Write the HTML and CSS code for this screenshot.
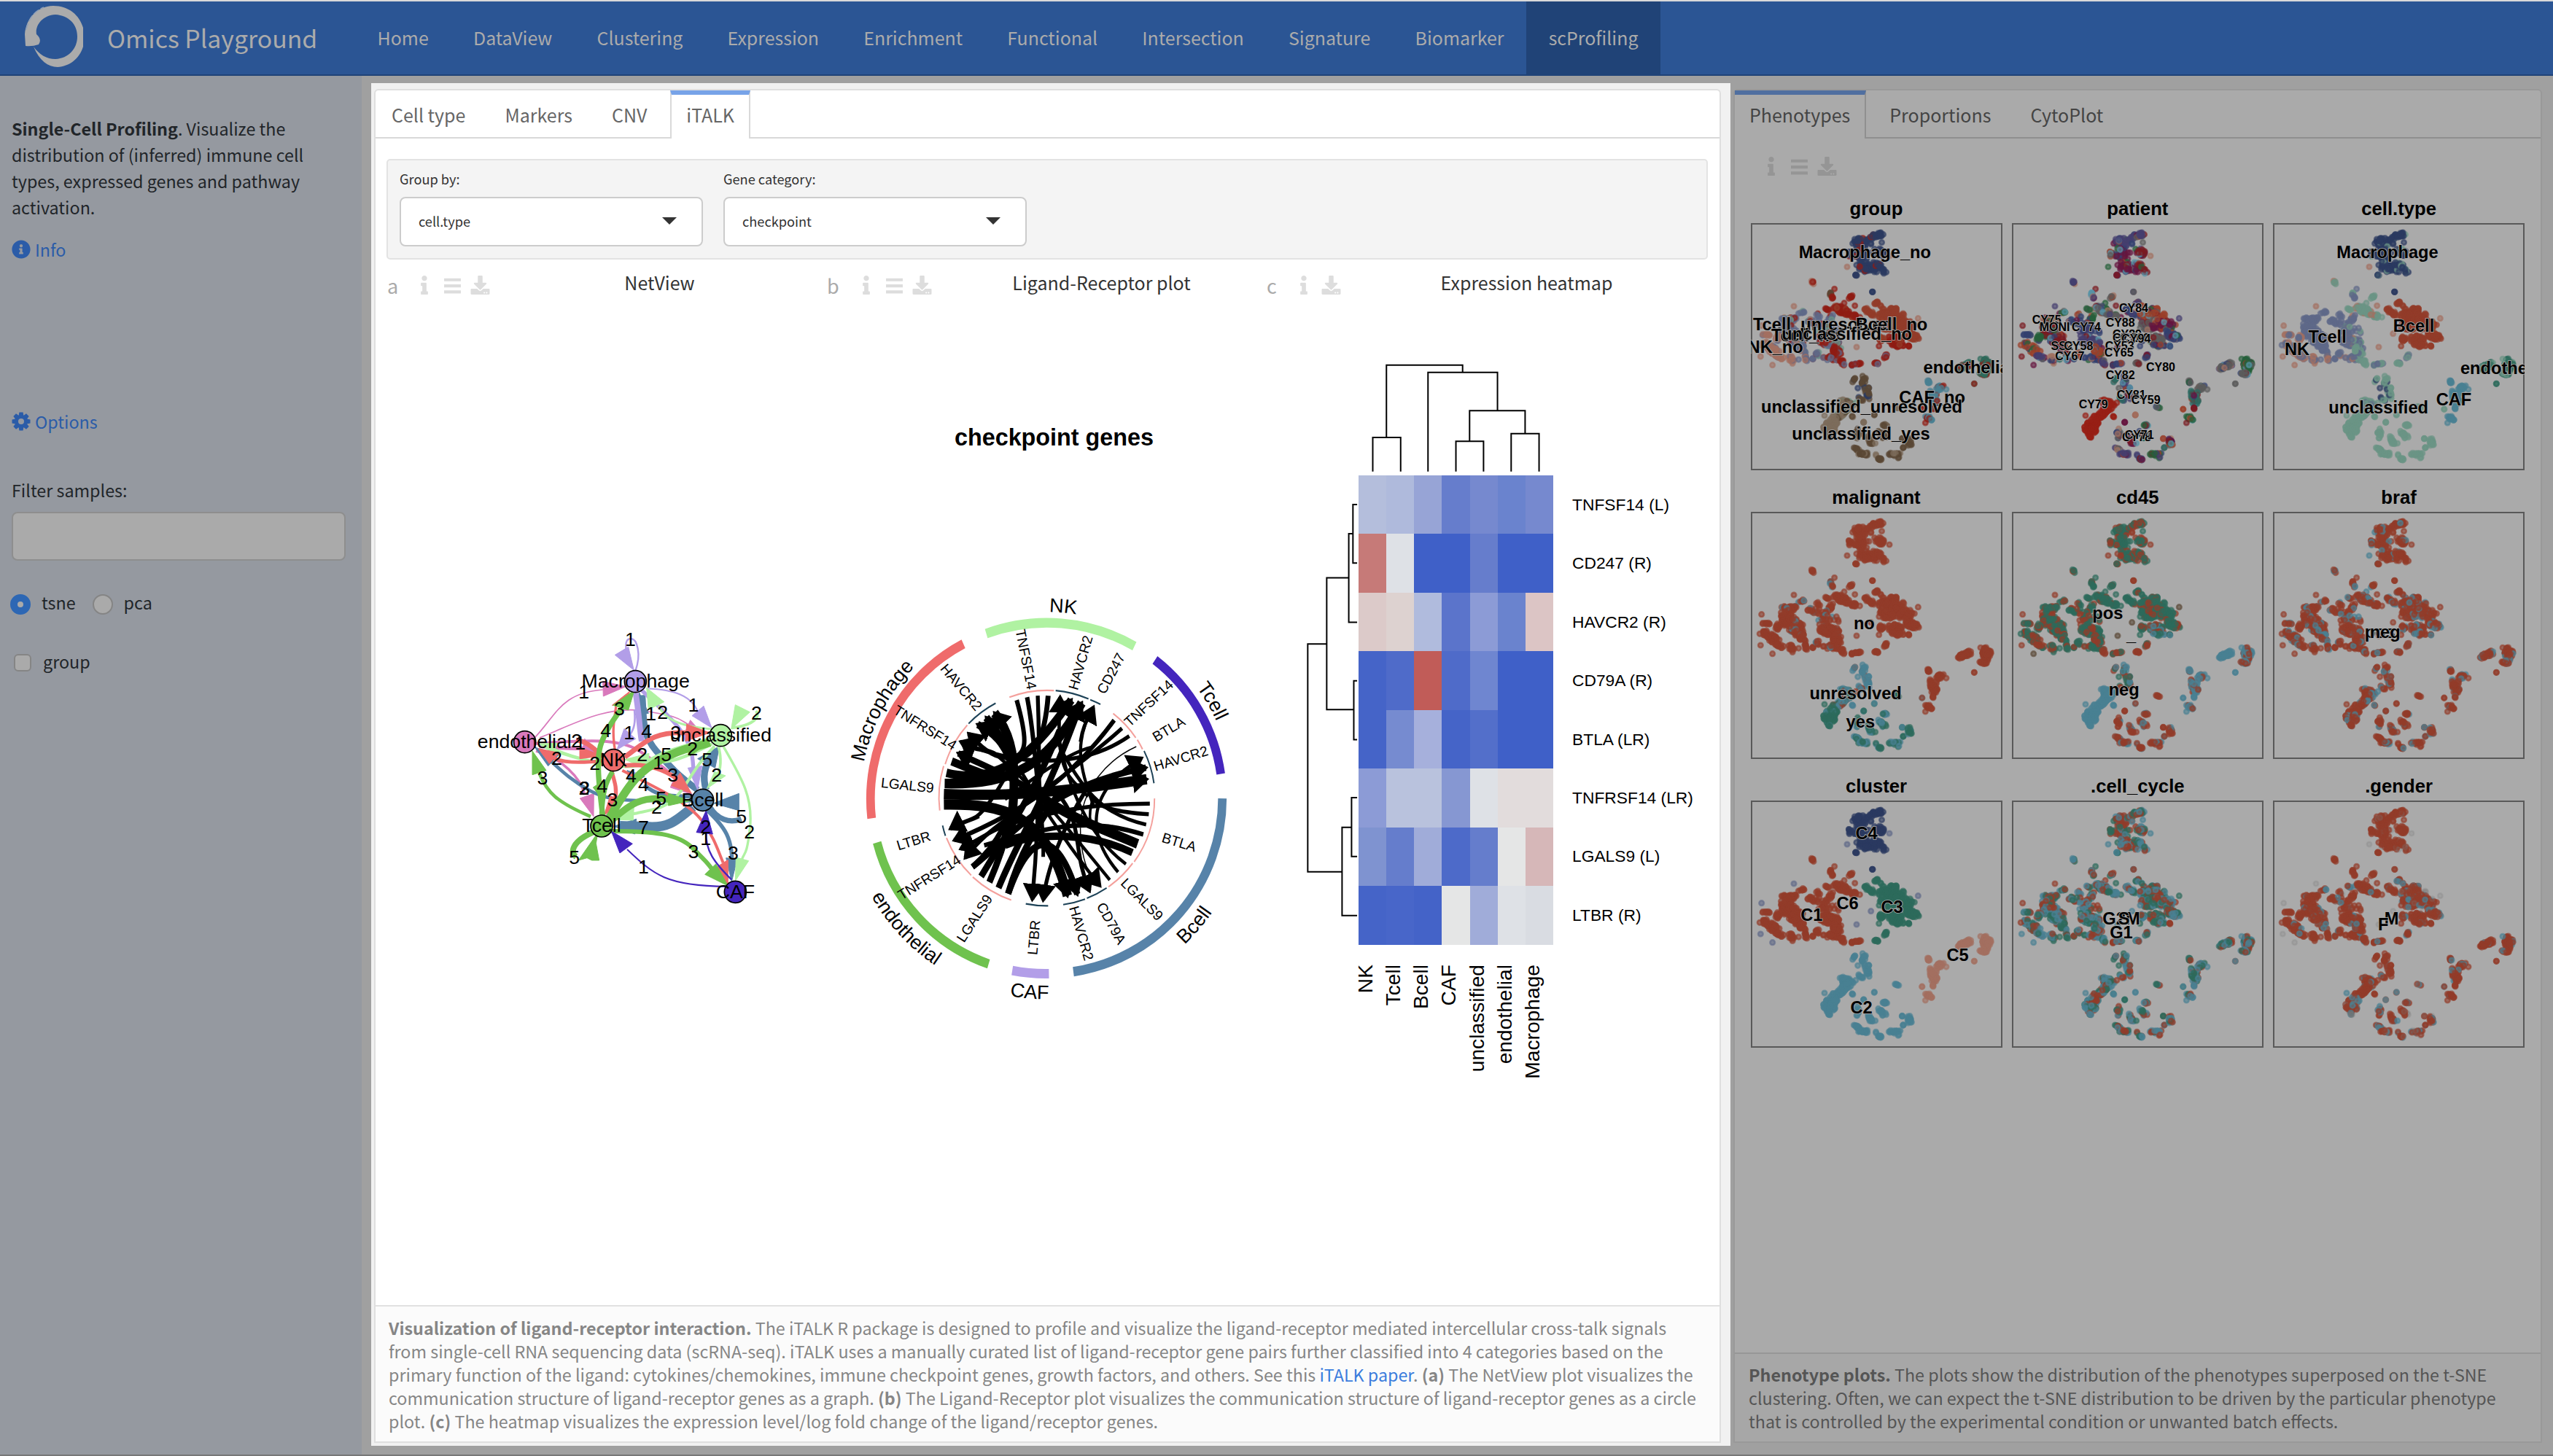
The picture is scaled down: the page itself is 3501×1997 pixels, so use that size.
FILE: index.html
```html
<!DOCTYPE html>
<html lang="en">
<head>
<meta charset="utf-8">
<title>Omics Playground</title>
<link rel="stylesheet" href="styles.css">
</head>
<body>
<svg class="defs" width="0" height="0">
  <symbol id="i-info" viewBox="0 0 192 512"><path d="M20 424.229h20V279.771H20c-11.046 0-20-8.954-20-20V212c0-11.046 8.954-20 20-20h112c11.046 0 20 8.954 20 20v212.229h20c11.046 0 20 8.954 20 20V492c0 11.046-8.954 20-20 20H20c-11.046 0-20-8.954-20-20v-47.771c0-11.046 8.954-20 20-20zM96 0C56.235 0 24 32.235 24 72s32.235 72 72 72 72-32.235 72-72S135.764 0 96 0z"/></symbol>
  <symbol id="i-bars" viewBox="0 0 24 24"><path d="M1 3h22v4H1zM1 11h22v4H1zM1 19h22v4H1z"/></symbol>
  <symbol id="i-down" viewBox="0 0 512 512"><path d="M216 0h80c13.3 0 24 10.7 24 24v168h87.7c17.8 0 26.7 21.5 14.1 34.1L269.7 378.3c-7.5 7.5-19.8 7.5-27.3 0L90.1 226.1c-12.6-12.6-3.7-34.1 14.1-34.1H192V24c0-13.3 10.7-24 24-24zm296 376v112c0 13.3-10.7 24-24 24H24c-13.3 0-24-10.7-24-24V376c0-13.3 10.7-24 24-24h146.7l49 49c20.1 20.1 52.5 20.1 72.6 0l49-49H488c13.3 0 24 10.7 24 24zm-124 88c0-11-9-20-20-20s-20 9-20 20 9 20 20 20 20-9 20-20zm64 0c0-11-9-20-20-20s-20 9-20 20 9 20 20 20 20-9 20-20z"/></symbol>
</svg>
<nav class="navbar">
  <svg class="logo" viewBox="0 0 100 110"><path d="M35 66L34 50C36 28 50 12 73 11C99 11 115 30 116 53C116 78 99 94 79 95C66 95 54 86 46 67C54 78 64 84 76 84C94 83 106 70 106 53C106 36 94 24 76 23C58 24 48 38 50 50Q58 57 53 64Q44 67 35 66Z" transform="translate(-14 0)"/><path class="bristle" d="M22 44C25 28 34 18 46 13"/></svg>
  <span class="brand">Omics Playground</span>
  <ul class="menu"><li>Home</li><li>DataView</li><li>Clustering</li><li>Expression</li><li>Enrichment</li><li>Functional</li><li>Intersection</li><li>Signature</li><li>Biomarker</li><li class="on">scProfiling</li></ul>
</nav>
<div class="page">
  <aside class="sidebar">
    <p class="intro"><b>Single-Cell Profiling</b>. Visualize the distribution of (inferred) immune cell types, expressed genes and pathway activation.</p>
    <a class="side-link info"><svg viewBox="0 0 512 512"><path d="M256 8C119.043 8 8 119.083 8 256c0 136.997 111.043 248 248 248s248-111.003 248-248C504 119.083 392.957 8 256 8zm0 110c23.196 0 42 18.804 42 42s-18.804 42-42 42-42-18.804-42-42 18.804-42 42-42zm56 254c0 6.627-5.373 12-12 12h-88c-6.627 0-12-5.373-12-12v-24c0-6.627 5.373-12 12-12h12v-64h-12c-6.627 0-12-5.373-12-12v-24c0-6.627 5.373-12 12-12h64c6.627 0 12 5.373 12 12v100h12c6.627 0 12 5.373 12 12v24z"/></svg>Info</a>
    <a class="side-link options"><svg viewBox="-13 -13 26 26"><circle r="6.5" fill="none" stroke="#2b5ca8" stroke-width="5"/><g id="teeth"><path d="M-2.6-12.5h5.2l.8 5h-6.8zM-2.6 12.5h5.2l.8-5h-6.8zM-12.5-2.6v5.2l5 .8v-6.8zM12.5-2.6v5.2l-5 .8v-6.8z"/></g><use href="#teeth" transform="rotate(45)"/></svg>Options</a>
    <label class="filter-label">Filter samples:</label>
    <div class="text-input"></div>
    <div class="radios"><i class="radio on"></i><span>tsne</span><i class="radio"></i><span>pca</span></div>
    <div class="checks"><i class="check"></i><span>group</span></div>
  </aside>
  <section class="spotlight">
    <div class="panel main">
      <div class="tabs"><span>Cell type</span><span>Markers</span><span>CNV</span><span class="on">iTALK</span></div>
      <div class="filters">
        <div class="field"><label>Group by:</label><div class="select">cell.type<i></i></div></div>
        <div class="field"><label>Gene category:</label><div class="select">checkpoint<i></i></div></div>
      </div>
      <div class="plots">
        <div class="plot a">
          <header><em>a</em><svg class="ic-i"><use href="#i-info"/></svg><svg class="ic-b"><use href="#i-bars"/></svg><svg class="ic-d"><use href="#i-down"/></svg><h3>NetView</h3></header>
          <svg class="canvas" viewBox="531 412 603 1378"><g id="net" transform="translate(630 840) scale(.33333)"></g></svg>
        </div>
        <div class="plot b">
          <header><em>b</em><svg class="ic-i"><use href="#i-info"/></svg><svg class="ic-b"><use href="#i-bars"/></svg><svg class="ic-d"><use href="#i-down"/></svg><h3>Ligand-Receptor plot</h3></header>
          <svg class="canvas" viewBox="1134 412 604 1378">
            <defs>
              <marker id="head" viewBox="0 0 64 84" refX="54" refY="42" markerWidth="64" markerHeight="84" markerUnits="userSpaceOnUse" orient="auto"><path d="M0 0L64 42L0 84Z"/></marker>
              <path id="cw" d="M1180 1095A256 256 0 0 1 1692 1095A256 256 0 0 1 1180 1095"/>
              <path id="ccw" d="M1160 1095A276 276 0 0 0 1712 1095A276 276 0 0 0 1160 1095"/>
            </defs>
            <text class="plot-title" x="1446" y="610">checkpoint genes</text>
            <g id="chord" transform="translate(1150 780) scale(.357143 .395385)" fill="none"></g>
            <g id="genes" class="genes"></g>
            <g class="sectors">
              <text><textPath href="#cw" startOffset="125">Macrophage</textPath></text>
              <text><textPath href="#cw" startOffset="424">NK</textPath></text>
              <text><textPath href="#cw" startOffset="668">Tcell</textPath></text>
              <text><textPath href="#ccw" startOffset="206">endothelial</textPath></text>
              <text><textPath href="#ccw" startOffset="409">CAF</textPath></text>
              <text><textPath href="#ccw" startOffset="671">Bcell</textPath></text>
            </g>
          </svg>
        </div>
        <div class="plot c">
          <header><em>c</em><svg class="ic-i"><use href="#i-info"/></svg><svg class="ic-d"><use href="#i-down"/></svg><h3>Expression heatmap</h3></header>
          <svg class="canvas" viewBox="1737 412 603 1378">
            <g transform="translate(1770 470) scale(.38265 .65689)"><g id="cells" shape-rendering="crispEdges"></g>
              <path class="tree" d="M294 269V198H394V269M343 198V47H616V62M492 269V62H741V142M641 206V142H840V190M592 269V206H691V269M790 269V190H890V269M238 338H223V460H238M223 399H208V584H238M208 491H129V766H226M238 706H226V829H238M129 629H61V1105H184M238 950H218V1073H238M218 1012H184V1196H238"/></g>
            <g id="hm-labels" class="hm"></g>
          </svg>
        </div>
      </div>
      <footer><b>Visualization of ligand-receptor interaction.</b> The iTALK R package is designed to profile and visualize the ligand-receptor mediated intercellular cross-talk signals<br>from single-cell RNA sequencing data (scRNA-seq). iTALK uses a manually curated list of ligand-receptor gene pairs further classified into 4 categories based on the<br>primary function of the ligand: cytokines/chemokines, immune checkpoint genes, growth factors, and others. See this <a>iTALK paper</a>. <b>(a)</b> The NetView plot visualizes the<br>communication structure of ligand-receptor genes as a graph. <b>(b)</b> The Ligand-Receptor plot visualizes the communication structure of ligand-receptor genes as a circle<br>plot. <b>(c)</b> The heatmap visualizes the expression level/log fold change of the ligand/receptor genes.</footer>
    </div>
  </section>
  <section class="panel dim">
    <div class="tabs"><span class="on">Phenotypes</span><span>Proportions</span><span>CytoPlot</span></div>
    <div class="tools"><svg class="ic-i"><use href="#i-info"/></svg><svg class="ic-b"><use href="#i-bars"/></svg><svg class="ic-d"><use href="#i-down"/></svg></div>
    <div class="grid" id="grid"></div>
    <footer><b>Phenotype plots.</b> The plots show the distribution of the phenotypes superposed on the t-SNE<br>clustering. Often, we can expect the t-SNE distribution to be driven by the particular phenotype<br>that is controlled by the experimental condition or unwanted batch effects.</footer>
  </section>
</div>
<script src="plots.js"></script>
</body>
</html>
```
FILE: styles.css
```css
*{box-sizing:border-box}
html,body{margin:0;height:100%}
body{width:3501px;height:1997px;background:#a0a0a0;font-family:"Noto Sans CJK SC","Source Sans Pro",sans-serif;font-size:23.3px;line-height:36px;color:#212529;overflow:hidden;border-top:2px solid #d9d9d9;border-bottom:2px solid #777}
.defs{position:absolute}
.navbar{height:102px;background:#2b5594;border-bottom:2px solid #204377;display:flex;align-items:center;color:#ababab;white-space:nowrap}
.logo{width:100px;height:110px;margin-left:14px;fill:#ababab;flex:none}
.bristle{fill:none;stroke:#8fa0b8;stroke-width:1.5;stroke-dasharray:9 3}
.brand{width:340px;margin-left:33px;font-size:33.8px}
.menu{display:flex;list-style:none;margin:0;padding:0;height:100%;font-size:24.95px}
.menu li{padding:0 30.6px;height:100%;line-height:98px}
.menu .on{background:#204377}
.page{display:flex;height:1891px}
.sidebar{width:496px;background:#9599a0;padding:54px 20px 0 16px;flex:none}
.intro{margin:0 0 22px;width:440px}
.side-link{display:flex;align-items:center;gap:6px;color:#2b5ca8}
.side-link svg{width:26px;height:26px;fill:#2b5ca8}
.options{margin-top:200px}
.filter-label{display:block;margin-top:58px}
.text-input{width:458px;height:67px;margin-top:12px;background:#aaa;border:2px solid #8e8e8e;border-radius:8px}
.radios,.checks{display:flex;align-items:center}
.radios{margin-top:39px;margin-left:-2px}
.radio{width:28px;height:28px;border-radius:50%;background:#aaa;border:2px solid #858585;margin-top:6px}
.radio.on{border:10px solid #2d67b4}
.radios span{margin:0 23px 0 15px}
.checks{margin:45px 0 0 3px;gap:16px}
.check{width:24px;height:24px;border:2px solid #858585;border-radius:6px;background:#aaa;margin-top:4px}
.spotlight{width:1864px;margin:10px 0 0 13px;padding:8px 13px 4px 4px;background:#f1f1f1;height:1869px;flex:none}
.panel{border:2px solid #dfdfdf;border-radius:6px 6px 0 0;background:#fff;display:flex;flex-direction:column}
.main{height:1857px}
.tabs{height:66px;flex:none;display:flex;border-bottom:2px solid #d9d9d9;gap:10px;font-size:25px;color:#666;white-space:nowrap}
.tabs span{padding:5px 22px 0;height:66px;line-height:56px}
.tabs .on{background:#fff;border:2px solid #d9d9d9;border-top:6px solid #77a3e8;border-bottom:0;padding:0 20px;line-height:54px}
.filters{margin:28px 16px 0 15px;height:138px;flex:none;background:#f4f4f4;border:2px solid #e3e3e3;border-radius:5px;padding:8px 16px;display:flex;gap:28px;font-size:18.2px}
.field{width:416px}
.field label{display:block;line-height:34px;color:#333}
.select{margin-top:8px;height:68px;border:2px solid #ccc;border-radius:8px;background:#fff;padding:0 34px 2px 24px;display:flex;align-items:center;justify-content:space-between;color:#333}
.select i{border:10px solid transparent;border-top-color:#333;border-bottom:0}
.plots{display:flex;flex:1;padding-left:16px;min-height:0}
.plot{width:603px;display:flex;flex-direction:column}
.plot header{height:56px;display:flex;flex:none;align-items:flex-start;padding-top:22px;fill:#ddd}
.plot em{font-style:normal;color:#aaa;font-size:27px;width:45px;line-height:28px}
.b em{width:48px}
.ic-i{width:12px;height:26px}.ic-b{width:25px;height:26px;margin-left:20px}.ic-d{width:27px;height:26px;margin-left:12px}
.c .ic-d{margin-left:18px}
.plot h3{flex:1;margin:-9px 0 0 3px;text-align:center;font-weight:400;font-size:25px;color:#333}
.b h3{margin-left:6px}.c h3{margin-left:8px}
.canvas{display:block;width:603px;height:1378px}
.panel footer{margin-top:auto;flex:none;border-top:2px solid #e1e1e1;background:#fbfbfb;height:187px;padding:13px 0 0 18px;color:#868686;line-height:32px;white-space:nowrap}
.panel footer a{color:#3b7ddd}
.dim{width:1109px;height:1857px;margin:18px 0 0 4px;background:#aaa;border-color:#999}
.dim .tabs{border-color:#8f8f8f;color:#444}
.dim .tabs .on{background:#aaa;border-color:#506fa0 #8f8f8f;border-left:0}
.tools{height:59px;flex:none;padding:25px 0 0 44px;fill:#959595;display:flex}
.grid{display:grid;grid-template-columns:repeat(3,345px);column-gap:13.3px;margin-left:21.5px}
figure{margin:0}
figcaption{height:57px;padding-top:19px;text-align:center;font:bold 25.7px/36px "Liberation Sans",sans-serif;color:#000}
figure svg{display:block;width:345px;height:339px}
.frame{fill:none;stroke:#595959;stroke-width:6}
figure text{font:bold 71px "Liberation Sans",sans-serif;text-anchor:middle;stroke:#aaa;stroke-width:5px;paint-order:stroke}
.small text{font-size:48px}
.panel.dim footer{height:122px;background:#a7a7a7;border-color:#979797;color:#555;padding:12px 0 0 19px}
text{font-family:"Liberation Sans",sans-serif;fill:#000}
.nodes text{font-size:80px;text-anchor:middle}
.plot-title{font-weight:bold;font-size:32.4px;text-anchor:middle}
.genes text{font-size:19.3px;text-anchor:middle}
.sectors text{font-size:27px;text-anchor:middle}
.hm text{font-size:22.8px}
.hm .col{font-size:28.2px;text-anchor:end}
.tree{fill:none;stroke:#000;stroke-width:2;vector-effect:non-scaling-stroke}
```
FILE: plots.js
```js
const byId = id => document.getElementById(id);

/* ---------- NetView graph ---------- */
const C = {pu:'#b29ee8', pi:'#d979bc', gr:'#6fc24e', lg:'#b0f2a2', re:'#ef6b6b', bl:'#5783a9', id:'#4425bd'};
const edges = [
  ['pi', 5, 'M310 515C400 420 420 330 590 318', '590,283 685,305 592,345'],
  ['pi', 5, 'M330 515C450 470 600 380 760 405S900 440 950 465', '950,443 1000,500 925,500'],
  ['pi', 12, 'M310 540C480 530 650 510 740 570S850 640 900 700', '880,690 960,750 868,720'],
  ['pi', 11, 'M315 570C420 600 500 680 515 750', '496,765 553,745 552,840'],
  ['pi', 16, 'M330 550C420 560 470 560 520 560', '515,520 580,580 500,600'],
  ['bl', 14, 'M960 775C760 770 640 790 540 735S400 630 330 570', '310,555 410,585 365,632'],
  ['bl', 27, 'M980 730C900 670 870 640 810 570S760 450 752 340', '740,330 725,422 778,415'],
  ['bl', 16, 'M960 760C850 750 820 760 760 710', '690,650 762,675 700,712'],
  ['bl', 40, 'M960 800C880 870 850 885 780 882S700 880 660 878', '635,880 728,850 722,912'],
  ['bl', 28, 'M1015 730C1000 680 1005 640 1040 580', '1070,550 1052,640 980,602'],
  ['bl', 16, 'M1015 810C1090 880 1130 930 1120 1060', '1120,1108 1097,1010 1143,1015'],
  ['bl', 22, 'M1030 800C1060 850 1110 870 1160 850', '1045,785 1150,745 1150,815'],
  ['pu', 7, 'M724 240C750 170 730 110 707 108S680 130 690 180', '640,175 695,142 718,238'],
  ['pu', 6, 'M770 313C880 318 960 340 985 420', '957,425 1005,385 1038,475'],
  ['pu', 16, 'M750 320C840 410 950 490 960 610S965 640 965 650', '940,640 998,632 980,730'],
  ['pu', 24, 'M724 325C740 420 740 470 750 530', ''],
  ['pu', 8, 'M720 400C725 450 720 480 700 505', '678,478 725,520 648,565'],
  ['pu', 18, 'M730 660C680 760 640 800 600 850', ''],
  ['lg', 9, 'M1040 480C930 470 850 450 820 385', '770,310 842,368 778,400'],
  ['lg', 12, 'M1120 475C1210 465 1240 430 1220 405', '1118,480 1135,380 1195,410'],
  ['lg', 14, 'M1040 540C960 580 860 640 740 605', '680,605 780,580 775,645'],
  ['lg', 14, 'M1030 520C850 570 830 580 760 620S460 600 380 560', '325,540 402,538 385,580'],
  ['lg', 12, 'M1050 550C960 640 940 710 890 760S800 810 710 830', '635,852 718,800 715,855'],
  ['lg', 11, 'M1065 550C1080 600 1075 650 1060 670', '1095,672 1050,655 1018,725'],
  ['lg', 10, 'M1085 550C1160 680 1210 760 1195 890S1170 980 1160 1025', '1190,1022 1138,1008 1135,1105'],
  ['re', 10, 'M640 565C625 480 640 430 645 380', '628,382 700,325 690,380'],
  ['re', 20, 'M680 595C760 540 790 490 930 495', '935,460 1030,495 930,530'],
  ['re', 14, 'M590 610C500 620 430 620 390 600', '325,560 410,578 370,622'],
  ['re', 18, 'M680 630C760 620 830 640 890 680', '908,660 955,745 872,712'],
  ['re', 20, 'M480 525C530 530 560 570 590 590', '495,555 590,590 495,602'],
  ['re', 16, 'M625 650C640 700 650 730 640 770', '620,755 675,775 595,835'],
  ['re', 12, 'M670 650C850 740 950 790 1000 860S1060 970 1085 1030', '1055,1050 1105,1018 1105,1125'],
  ['gr', 22, 'M590 840C580 750 560 620 580 550S650 420 700 350', '720,320 695,402 632,382'],
  ['gr', 20, 'M585 830C590 740 600 700 630 655', '550,720 595,690 580,760'],
  ['gr', 34, 'M615 850C700 700 740 650 840 600S960 560 1030 535', '940,570 1040,525 950,590'],
  ['gr', 28, 'M610 870C700 790 750 750 870 770', '860,745 950,775 860,795'],
  ['gr', 14, 'M540 840C400 780 360 740 330 665', '300,570 357,650 300,668'],
  ['gr', 18, 'M620 900C800 900 900 910 960 970S1020 1030 1050 1070', '1055,1035 1105,1125 1010,1078'],
  ['gr', 24, 'M560 900C460 940 455 990 480 1005', '570,905 562,950 575,1020 545,1020 525,1010 490,1020'],
  ['id', 6, 'M1100 1128C850 1125 800 1080 690 975', '625,900 712,952 660,990'],
  ['id', 7, 'M1120 1100C1050 1030 1010 980 1015 900', '1015,815 1042,912 975,905']
];
const nodes = [['endothelial',269,533,'pi',268],['Macrophage',724,284,'pu',725],['unclassified',1075,506,'lg',1075],['NK',634,608,'re',634],['Bcell',1001,772,'bl',1000],['Tcell',585,879,'gr',585],['CAF',1135,1150,'id',1135]];
const nums = [[1,703,138],[1,512,353],[3,658,424],[4,602,512],[2,482,556],[1,497,565],[2,400,628],[2,557,648],[3,342,708],[2,513,750],[3,515,750],[4,587,740],[3,630,797],[4,706,698],[4,757,736],[2,752,611],[1,698,523],[4,770,516],[1,788,444],[2,836,437],[1,963,408],[3,890,523],[5,851,612],[1,818,644],[2,959,589],[5,1019,634],[3,878,696],[2,1058,696],[5,830,793],[2,811,827],[7,757,911],[5,1160,868],[2,1013,910],[1,1013,958],[2,1193,931],[3,1126,1017],[3,963,1010],[5,473,1034],[1,757,1073],[2,1222,442]];
byId('net').innerHTML = edges.map(([c, w, d, p]) => `<path d="${d}" fill="none" stroke="${C[c]}" stroke-width="${w}"/><polygon points="${p}" fill="${C[c]}" stroke="${C[c]}" stroke-width="3" stroke-linejoin="round"/>`).join('')
  + '<g class="nodes">' + nodes.map(([, x, y, c]) => `<circle cx="${x}" cy="${y}" r="45" fill="${C[c]}" stroke="#000" stroke-width="5"/>`).join('')
  + nodes.map(([t, , y, , x]) => `<text x="${x}" y="${y + 25}">${t}</text>`).join('')
  + nums.map(([t, x, y]) => `<text x="${x}" y="${y}">${t}</text>`).join('') + '</g>';

/* ---------- Ligand-receptor circle ---------- */
const arc = (r1, r2, w, c, a, b, x, y) => `<path d="M${a} ${b}A${r1} ${r2} 0 0 1 ${x} ${y}" stroke="${c}" stroke-width="${w}"/>`;
const outer = [[C.re,127,866,480,260],[C.lg,568,224,1138,268],[C.id,1217,316,1470,712],[C.bl,1476,797,903,1399],[C.pu,809,1406,668,1395],[C.gr,577,1372,148,950]];
const P = '#f4a09c', D = '#1d4257';
const inner = [[P,657,445,828,422],[D,835,422,961,451],[D,968,454,1007,470],[P,1056,502,1143,586],[P,1149,593,1169,626],[D,1175,632,1213,744],[P,1215,797,1137,1017],[P,1131,1022,1038,1104],[D,1031,1108,955,1144],[D,948,1147,864,1166],[D,806,1170,720,1163],[P,664,1150,516,1070],[P,510,1064,415,934],[D,411,927,400,891],[P,389,839,404,684],[P,410,678,495,542],[D,500,537,604,466]];
/* [start x, y, control 1, control 2, end x, y, width, arrow] */
const ribbons = [
  [405,818,640,815,800,850,880,1135,36,1],[405,782,640,790,820,780,1185,730,36,1],[408,745,680,750,800,680,935,465,34,1],[415,708,640,760,780,600,895,455,30,1],[435,668,600,730,680,760,665,640,28,0],
  [665,900,680,720,690,600,600,500,34,1],[640,930,720,700,640,600,568,516,28,1],[670,720,660,620,600,570,535,540,26,1],
  [685,455,730,600,730,660,640,655,17,0],[640,655,590,655,540,610,500,572,15,1],[725,445,750,560,760,700,770,780,17,0],[766,440,775,650,770,900,745,1148,15,1],[806,440,790,620,740,660,660,660,19,0],
  [770,660,770,800,790,900,787,1000,14,0],[950,770,860,900,800,1050,787,1150,15,1],
  [1060,525,900,720,740,830,445,942,16,1],[1090,553,960,660,840,730,660,860,14,0],[660,860,600,900,550,930,487,1003,15,1],[1118,580,960,680,720,700,470,600,14,1],[1145,617,1040,660,930,760,930,900,4,0],[930,900,930,980,950,1030,965,1060,4,0],
  [1197,815,1000,815,880,830,680,880,14,0],[680,880,600,900,540,940,470,972,14,1],[1193,852,1000,840,980,810,960,770,14,0],[1183,888,1000,850,940,760,850,620,13,0],[850,620,845,560,850,500,852,445,13,1],[1172,922,980,870,860,880,560,960,16,0],
  [1150,955,980,890,880,860,760,780,34,0],[1130,985,980,920,780,910,640,960,26,0],[760,780,660,720,600,700,460,640,22,1],[1105,1025,980,940,900,800,860,640,12,0],[1075,1053,960,930,940,780,1165,657,12,1],[1043,1080,880,900,780,780,600,640,12,0],[600,640,560,620,530,640,475,600,14,1],
  [652,1128,700,980,760,900,860,760,24,0],[652,1128,740,900,840,900,918,1130,24,1],[615,1108,700,920,800,800,930,470,24,1],[580,1088,650,940,680,820,680,700,24,0],[548,1068,660,900,760,760,850,560,24,0],[515,1035,700,900,800,760,1182,690,22,1],[515,1035,620,950,660,860,690,760,20,0],
  [520,865,560,850,620,760,680,660,14,0],[540,858,500,875,460,885,430,902,15,1],[980,480,900,600,930,700,980,820,12,0],[930,600,940,540,960,520,980,480,13,1],[980,790,950,880,980,900,980,900,10,0],[700,700,780,820,880,960,1005,1100,12,1],[860,800,940,900,900,980,965,1118,15,1],
  [960,790,880,720,850,700,850,560,12,0],[640,800,760,720,880,640,970,620,12,0]
];
byId('chord').innerHTML = outer.map(([c, ...p]) => arc(675, 610, 33, c, ...p)).join('') + inner.map(([c, ...p]) => arc(414, 373, 5.5, c, ...p)).join('')
  + ribbons.map(([a, b, c, d, e, f, g, h, w, m]) => `<path d="M${a} ${b}C${c} ${d} ${e} ${f} ${g} ${h}" stroke="#000" stroke-width="${w}"${m ? ' marker-end="url(#head)"' : ''}/>`).join('');
const genes = [['TNFSF14',722,313,79],['HAVCR2',930,325,-74],['CD247',1047,362,-62],['TNFSF14',1192,465,-43],['BTLA',1269,555,-31],['HAVCR2',1316,657,-17],['BTLA',1310,948,17],['LGALS9',1168,1147,45],['CD79A',1050,1230,61],['HAVCR2',935,1265,74],['LTBR',750,1280,-85],['LGALS9',522,1213,-57],['TNFRSF14',348,1070,-32],['LTBR',288,943,-17],['LGALS9',265,750,6],['TNFRSF14',334,550,32],['HAVCR2',473,410,50]];
byId('genes').innerHTML = genes.map(([t, x, y, r]) => `<text transform="translate(${(1150 + x / 2.8).toFixed(1)} ${(780 + y / 2.529).toFixed(1)}) rotate(${r})" y="7">${t}</text>`).join('');

/* ---------- Expression heatmap ---------- */
const heat = ['b4bedc afbadc 97a4d6 667dcc 7689cf 6a83ce 7689cf','c67a78 dee1e6 3f60c8 3f60c8 667dcc 3f60c8 3f60c8','dccac9 ddd2d0 b0bbdd 5b74cb 8c9bd6 6a83ce dcc5c5','4564c8 4f6bc9 c15c58 4f6bc9 6f86d0 3f60c8 3f60c8','4564c8 768bd0 a6b0dc 4564c8 536fca 3f60c8 3f60c8','8c9bd6 b9c2dd b9c2dd 8697d2 dee1e6 e2dcdc e2dcdc','7f93d0 657dcc a0acd9 4d6ac9 657dcc e5e6e6 d6b7b8','4564c8 4866c9 4463c8 e5e6e6 a0acd9 dee1e6 d9dce2'];
byId('cells').innerHTML = heat.map((r, j) => r.split(' ').map((c, i) => `<rect x="${243 + i * 99.7}" y="${277 + j * 122.5}" width="100" height="122.8" fill="#${c}"/>`).join('')).join('');
byId('hm-labels').innerHTML = ['TNFSF14 (L)','CD247 (R)','HAVCR2 (R)','CD79A (R)','BTLA (LR)','TNFRSF14 (LR)','LGALS9 (L)','LTBR (R)'].map((t, j) => `<text x="2156" y="${700 + j * 80.4}">${t}</text>`).join('')
  + ['NK','Tcell','Bcell','CAF','unclassified','endothelial','Macrophage'].map((t, i) => `<text class="col" transform="translate(${1882 + i * 38.15} 1323) rotate(-90)">${t}</text>`).join('');

/* ---------- t-SNE phenotype grid ---------- */
/* group tag, x1, y1, x2, y2, half width, count, dominant patient colour */
const blobs = `m 445 105 490 105 18 45 v
m 490 92 560 70 9 30 v
m 455 150 490 160 25 40 p
m 425 140 425 160 7 6 r
m 470 205 545 210 22 60 p
m 530 135 555 150 13 22 d
m 545 195 572 232 7 14 d
m 448 242 452 238 4 5 p
m 512 112 512 108 2 2 g
m 557 105 557 105 1 1 c
m 518 309 518 309 1 3 y
o 588 161 588 161 0 1 v
o 414 206 414 206 0 1 d
o 195 368 195 368 0 1 v
o 62 448 62 448 0 1 d
o 58 575 58 575 0 1 d
o 107 610 107 610 0 1 v
o 706 418 706 418 0 1 v
o 512 481 512 481 0 1 y
o 453 536 453 536 0 1 p
k 265 266 280 274 5 7 v
s 362 297 362 297 0 1 d
s 334 320 350 318 7 6 c
s 352 328 356 340 3 4 v
u 420 335 434 326 4 7 y
u 402 355 402 355 0 1 g
u 446 366 446 366 0 1 y
u 370 375 410 390 15 42 y
u 410 400 460 412 9 20 y
u 325 380 345 382 4 6 g
q 350 405 340 430 10 12 g
t 210 400 235 392 5 7 g
t 290 400 300 410 4 5 r
t 250 430 330 440 13 22 n
t 140 425 205 425 12 34 s
t 160 460 215 515 30 125 d
n 65 483 98 487 4 9 n
n 130 485 128 510 9 14 g
n 65 525 85 525 11 14 r
n 95 540 125 560 17 30 r
t 205 520 240 550 17 26 d
n 115 572 150 580 8 16 v
n 180 575 190 598 11 14 s
t 215 585 215 587 1 1 t
n 240 570 246 598 6 10 c
t 272 584 274 582 3 4 n
q 300 460 365 470 16 22 n
q 310 500 372 530 25 90 v
q 290 560 300 568 8 10 r
q 320 580 375 580 11 26 n
r 360 540 385 570 14 26 r
r 385 585 400 605 7 14 v
r 430 610 474 602 3 16 v
b 488 380 525 405 8 22 n
b 530 358 540 354 6 8 v
b 553 368 560 380 5 4 r
b 590 377 625 385 6 14 r
b 545 402 640 410 19 66 r
b 540 445 600 450 19 34 y
b 600 440 680 450 21 52 p
h 600 500 630 520 22 55 y
b 655 480 700 500 15 46 n
b 548 500 560 505 10 14 n
h 545 532 545 532 0 1 n
h 590 530 640 530 5 8 n
h 668 530 672 534 3 4 n
r 526 601 546 604 3 9 y
r 566 590 575 568 4 9 n
v 437 680 450 664 4 6 t
v 482 658 478 700 9 15 v
v 490 710 505 745 7 14 v
v 458 705 458 705 0 1 r
v 500 700 521 730 2 3 c
v 462 746 478 757 4 7 t
w 385 762 440 770 13 32 R
w 430 775 360 830 13 55 R
W 350 840 335 885 27 75 R
W 321 818 321 818 0 1 R
W 338 900 342 906 5 5 R
w 434 820 438 824 1 3 R
x 526 815 526 815 1 2 s
x 612 782 628 787 2 6 g
x 482 846 482 846 1 3 p
x 455 878 458 905 9 12 n
x 498 908 515 933 7 16 p
x 530 932 530 932 0 1 r
x 563 858 577 858 6 9 t
x 545 882 568 910 9 14 t
x 445 950 470 970 5 14 v
x 465 975 498 978 7 18 v
x 532 978 534 982 1 2 n
x 542 995 556 1000 4 10 n
x 595 975 628 985 13 18 g
x 637 910 642 914 1 3 r
x 645 950 645 950 1 3 t
x 668 912 672 945 9 18 V
f 746 672 750 686 4 9 y
f 785 705 815 705 11 20 y
f 768 720 770 762 15 46 t
f 768 785 768 790 2 5 d
F 722 792 722 792 1 2 r
f 736 822 736 822 0 1 g
f 746 830 760 830 9 16 g
f 736 848 736 848 0 1 d
E 870 625 920 605 9 46 y
e 985 592 990 622 18 60 g
e 960 645 990 645 7 16 y
e 963 585 963 585 0 1 y
E 937 687 937 687 0 2 y`.split('\n').map(l => l.split(' '));
let seed = 12345;
const rnd = () => (seed = (seed * 16807) % 2147483647) / 2147483647;
const points = [];
for (const [tag, ...v] of blobs) {
  const [x1, y1, x2, y2, w, n] = v.map(Number);
  for (let i = 0; i < n; i++) {
    const t = rnd(), a = rnd() * 6.283, r = Math.sqrt(rnd()) * w;
    points.push([tag, x1 + (x2 - x1) * t + Math.cos(a) * r, y1 + (y2 - y1) * t + Math.sin(a) * r, v[6]]);
  }
}
const K = {B:'#933c2a', c:'#4a8093', g:'#2d6b5b', n:'#2b3a61', s:'#a47061', l:'#5f6988', a:'#6b9485', w:'#5a4735', t:'#7d6c5c', R:'#8f1d14'};
const PT = {v:'#463f70', p:'#65163f', r:'#9b4029', d:'#7a1a22', g:'#27603a', c:'#5795a8', y:'#5c5c5c', n:'#33416f', s:'#a27260', t:'#2d6b62', R:'#981f16', V:'#421650'};
const ptKeys = Object.keys(PT);
/* colour mixes: letters are drawn at random, so repeats weight the mix */
const mix = {
  group: {m:'nnnnnnnnnnnnnR', o:'s', k:'RRRs', s:'Raw', u:'RRRRRRRB', q:'lllRRRa', t:'llllllaRs', n:'sssssl', r:'RRRRl', b:'BBBBBBB', h:'RRRB', v:'wwwwwn', w:'tttwa', W:'t', x:'wwwt', f:'ccccR', F:'R', e:'gggggR', E:'gggR'},
  'cell.type': {m:'nnnnnnnna', o:'s', k:'aas', s:'lal', u:'aaaaas', q:'lllllas', t:'l', n:'sssslll', r:'aaal', b:'B', h:'BBBBB', v:'aaaan', w:'aaaaal', W:'a', x:'a', f:'c', F:'a', e:'ggggga', E:'ggga'},
  malignant: {'*':'B', t:'BBBBBBBBBc', q:'BBBBBBBBc', s:'cBc', v:'cccccB', w:'cccgB', W:'gggggc', x:'ccggg', F:'Bc'},
  cd45: {'*':'ggB', m:'gggBB', o:'wB', n:'ggB', u:'ggggggB', h:'gBc', b:'gggB', r:'BgB', v:'BBgc', w:'c', W:'c', x:'BBBc', f:'cccB', F:'c', E:'c', e:'cccBB'},
  braf: {'*':'BBBBc', m:'BBBBBBBBc', e:'BBBBBBBc', E:'BBBBBc', f:'BBBBBc'},
  cluster: {'*':'B', m:'n', o:'l', b:'g', h:'g', v:'c', w:'c', W:'c', x:'c', f:'s', F:'s', e:'s', E:'s'},
  '.cell_cycle': {'*':'BBcccgg', W:'BBccg', m:'BBBccg'},
  '.gender': {'*':'BBBBBBBBBc', o:'.', t:'BBBBB.Bc', W:'BB..c', x:'BBB.c', b:'BBBBc.', m:'BBBBB.'}
};
/* the two points next to the lower right of C3 stay with that cluster */
const colourOf = (name, tag, x) => name === 'cluster' && tag === 'r' && x > 500 ? 'g' : mix[name][tag] || mix[name]['*'];
const labels = {
  group: [['Macrophage_no',487,170],['Tcell_unresolved',314,468],['Bcell_no',597,468],['Tcell_no',243,513],['unclassified_no',413,506],['NK_no',119,561],['endothelial_no',978,643],['CAF_no',764,768],['unclassified_unresolved',474,805],['unclassified_yes',471,918]],
  patient: [['CY75',161,441],['MONI',194,471],['CY74',324,471],['CY84',519,393],['CY88',464,453],['CY89',492,500],['CY72',492,516],['CY60',524,516],['CY94',529,519],['SS2',224,549],['CY58',292,549],['CY53',461,547],['CY67',256,590],['CY65',458,576],['CY80',630,635],['CY82',464,669],['CY81',509,748],['CY59',569,769],['CY79',353,788],['CY78',531,923],['CY71',542,914]],
  'cell.type': [['Macrophage',489,170],['Tcell',242,518],['NK',117,569],['Bcell',597,474],['endothelial',976,647],['CAF',762,777],['unclassified',452,809]],
  malignant: [['no',484,509],['unresolved',449,797],['yes',469,915]],
  cd45: [['pos',412,466],['_',509,556],['neg',479,783]],
  braf: [['pos',458,544],['neg',479,544]],
  cluster: [['C4',494,186],['C6',416,473],['C1',268,521],['C3',599,488],['C5',869,685],['C2',473,902]],
  '.cell_cycle': [['G2M',468,536],['S',479,536],['G1',468,593]],
  '.gender': [['M',506,536],['F',472,561]]
};
byId('grid').innerHTML = Object.keys(labels).map(name => {
  const dots = points.map(([tag, x, y, pc]) => {
    let col, op = .6;
    if (name === 'patient') col = rnd() < (pc === 'R' ? 1 : .62) ? PT[pc] : PT[ptKeys[Math.floor(rnd() * 9)]];
    else {
      const m = colourOf(name, tag, x), k = m[Math.floor(rnd() * m.length)];
      if (k === '.') { col = '#777'; op = .2; } else col = K[k];
    }
    return `<circle cx="${x.toFixed(1)}" cy="${y.toFixed(1)}" r="10" fill="${col}" stroke="${col}" fill-opacity="${op}" stroke-opacity="${op}"/>`;
  }).join('');
  return `<figure${name === 'patient' ? ' class="small"' : ''}><figcaption>${name}</figcaption><svg viewBox="18 26 1035 1017"><g stroke-width="7.5">${dots}</g><rect class="frame" x="21" y="29" width="1029" height="1011"/>${labels[name].map(([t, x, y]) => `<text x="${x}" y="${y}">${t}</text>`).join('')}</svg></figure>`;
}).join('');
```
